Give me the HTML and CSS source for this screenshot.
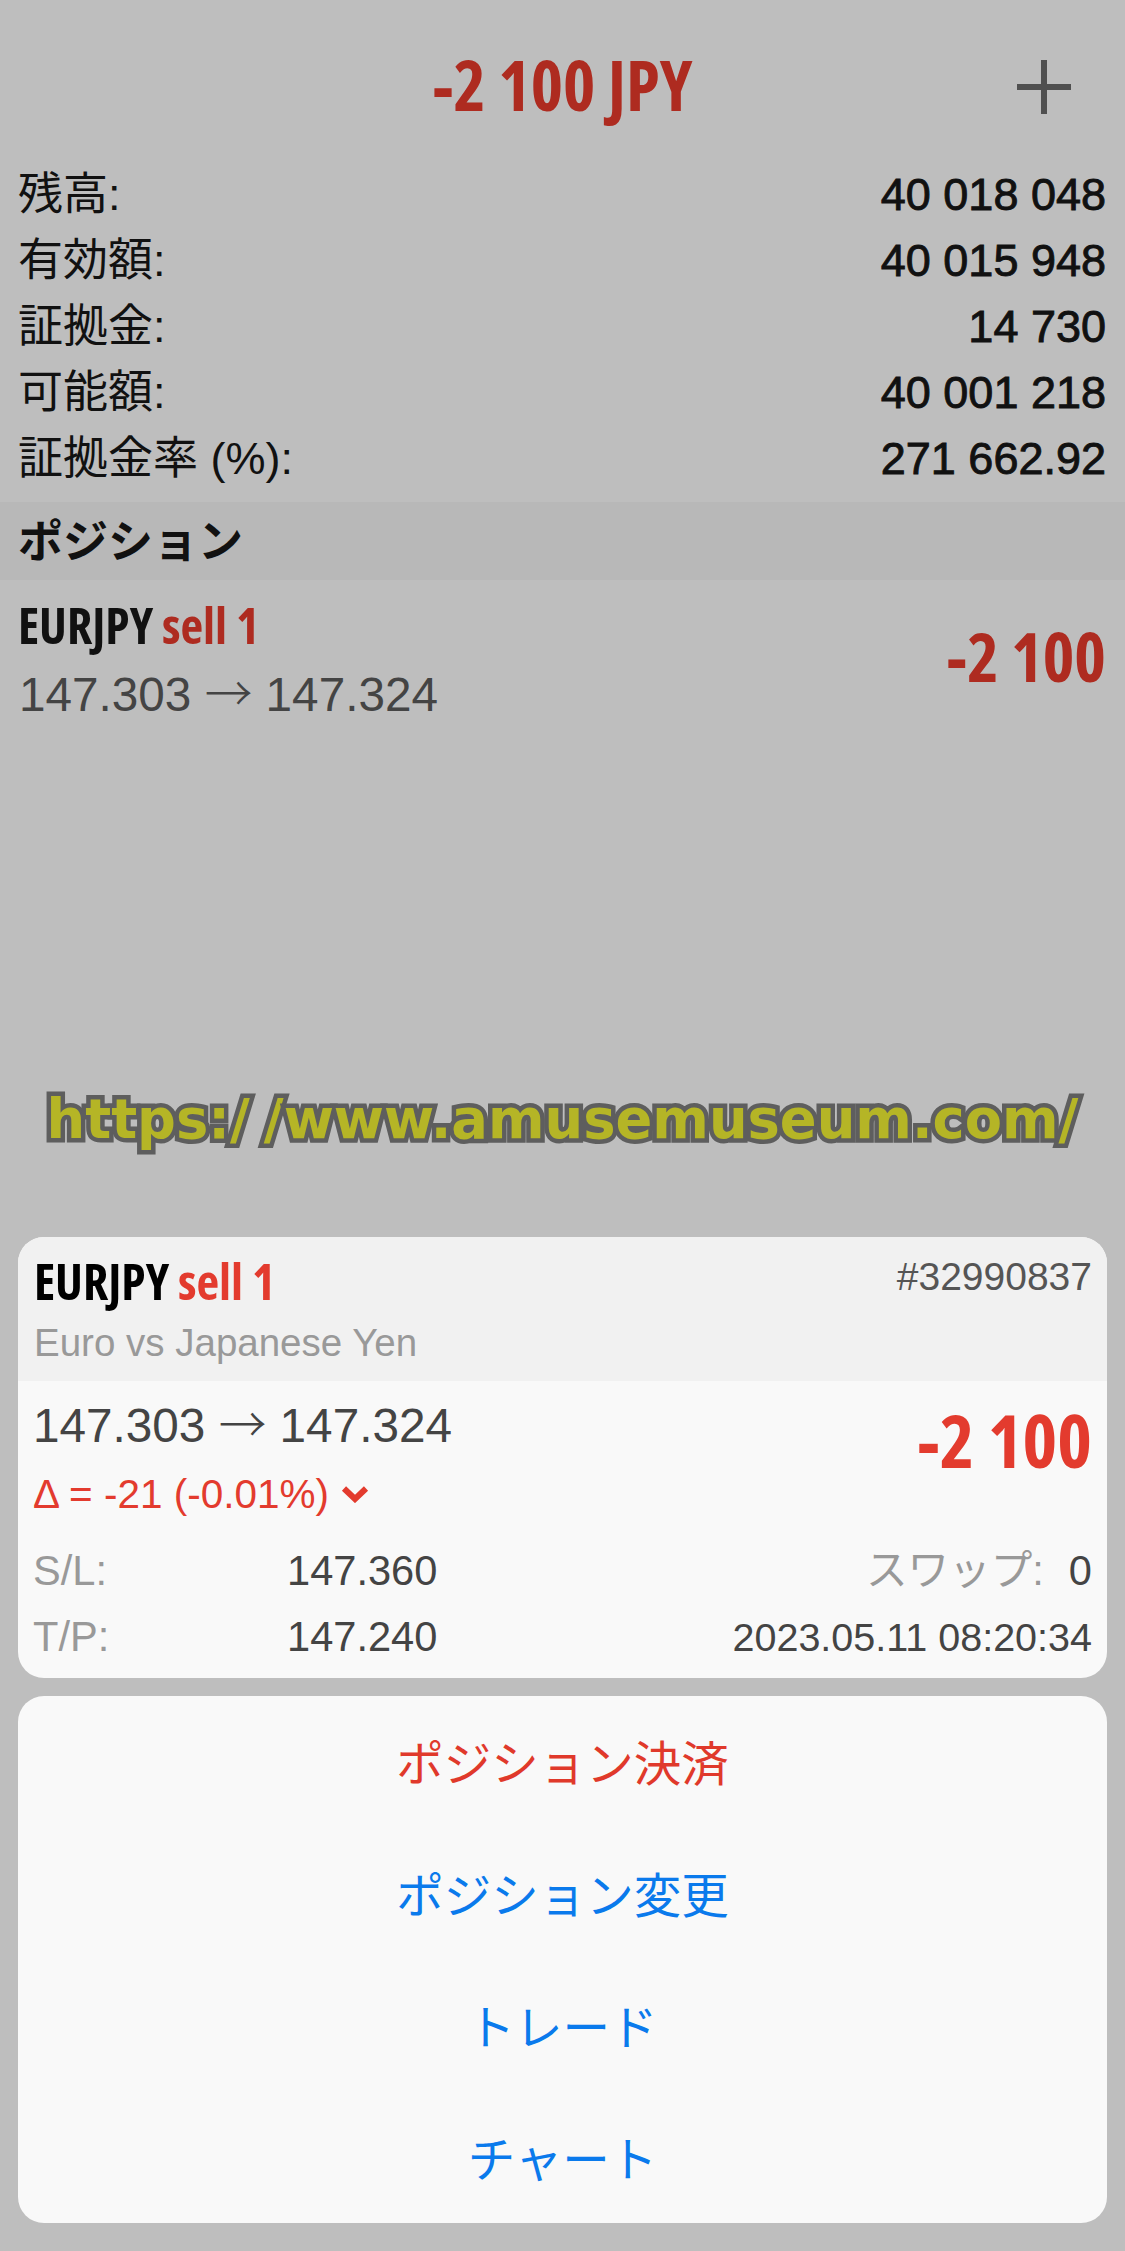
FILE: index.html
```html
<!DOCTYPE html>
<html lang="ja">
<head>
<meta charset="utf-8">
<title>EURJPY</title>
<link rel="stylesheet" href="styles.css">
</head>
<body>
<div class="screen">
  <header class="topbar">
    <div class="total narrow">-2 100 JPY</div>
    <svg class="plus" viewBox="0 0 54 54" aria-hidden="true"><path d="M27 0V54M0 27H54" fill="none" stroke="#505050" stroke-width="6"/></svg>
  </header>
  <section class="summary">
    <div class="row"><span>残高:</span><b>40 018 048</b></div>
    <div class="row"><span>有効額:</span><b>40 015 948</b></div>
    <div class="row"><span>証拠金:</span><b>14 730</b></div>
    <div class="row"><span>可能額:</span><b>40 001 218</b></div>
    <div class="row"><span>証拠金率 (%):</span><b>271 662.92</b></div>
  </section>
  <div class="band">ポジション</div>
  <section class="position">
    <div>
      <div class="symbol narrow">EURJPY <em>sell 1</em></div>
      <div class="prices">147.303 <span class="arrow">→</span> 147.324</div>
    </div>
    <div class="profit narrow">-2 100</div>
  </section>
  <div class="watermark">https:/<span class="slash">/</span>www.amusemuseum.com/</div>
  <section class="sheet">
    <div class="card">
      <div class="card-head">
        <div class="head-top">
          <div class="symbol narrow">EURJPY <em>sell 1</em></div>
          <div class="ticket">#32990837</div>
        </div>
        <div class="desc">Euro vs Japanese Yen</div>
      </div>
      <div class="card-body">
        <div class="quote">
          <div>
            <div class="prices">147.303 <span class="arrow">→</span> 147.324</div>
            <div class="delta">Δ = -21 (-0.01%)<svg class="chev" viewBox="0 0 28 18" aria-hidden="true"><path d="M3 3.5L14 14L25 3.5" fill="none" stroke="#e33b2e" stroke-width="6"/></svg></div>
          </div>
          <div class="profit narrow">-2 100</div>
        </div>
        <div class="detail">
          <div class="line"><span class="label">S/L:</span><span class="val">147.360</span><span class="right"><span class="label">スワップ:</span><span class="val zero">0</span></span></div>
          <div class="line"><span class="label">T/P:</span><span class="val">147.240</span><span class="right"><span class="val date">2023.05.11 08:20:34</span></span></div>
        </div>
      </div>
    </div>
    <nav class="menu">
      <div class="item danger">ポジション決済</div>
      <div class="item">ポジション変更</div>
      <div class="item">トレード</div>
      <div class="item">チャート</div>
    </nav>
  </section>
</div>
</body>
</html>
```
FILE: styles.css
```css
* { box-sizing: border-box; }
html, body { margin: 0; padding: 0; }
body {
  width: 1125px;
  height: 2251px;
  overflow: hidden;
  background: #bebebe;
  font-family: "Liberation Sans", "Noto Sans CJK JP", sans-serif;
  color: #111;
}
.screen { display: flex; flex-direction: column; height: 2251px; }
.narrow { font-family: "Open Sans", sans-serif; font-stretch: 75%; font-weight: 700; }
.topbar { height: 162px; padding-top: 48px; position: relative; display: flex; justify-content: center; align-items: flex-start; }
.total { font-size: 69px; line-height: 72px; color: #ae2b20; }
.plus { position: absolute; left: 1017px; top: 60px; width: 54px; height: 54px; }
.summary { padding: 0 19px; height: 340px; }
.row { height: 66px; display: flex; justify-content: space-between; align-items: center; font-size: 45px; line-height: 66px; }
.row span { margin-left: -1px; }
.row b { font-weight: 400; -webkit-text-stroke: 0.9px #111; color: #111; }
.band { height: 78px; background: #b8b8b8; padding-left: 18px; font-size: 45px; line-height: 74px; font-weight: 700; font-family: "Noto Sans CJK JP", sans-serif; }
.position { display: flex; justify-content: space-between; padding: 17px 19px 0; height: 657px; position: relative; }
.symbol { font-size: 49.5px; line-height: 56px; color: #111; margin-left: -1px; }
.symbol em { font-style: normal; color: #ae2b20; }
.prices { font-size: 47.7px; line-height: 56px; color: #444; margin-top: 10px; }
.arrow { font-family: "Noto Sans CJK JP", sans-serif; font-weight: 300; }
.profit { font-size: 67.5px; line-height: 72px; color: #ae2b20; margin-top: 23px; }
.watermark { height: 0; text-align: center; font-family: "DejaVu Sans", sans-serif; font-weight: 700; font-size: 54.3px; line-height: 64px; color: #b5b526; -webkit-text-stroke: 9px #5e5e5e; paint-order: stroke fill; position: relative; top: -149px; }
.slash { margin-left: 14px; }
.sheet { padding: 0 18px; display: flex; flex-direction: column; gap: 18px; }
.card { background: #f9f9f9; border-radius: 26px; overflow: hidden; height: 441px; }
.card-head { background: #f1f1f1; height: 144px; padding: 16px 15px 0 16px; }
.head-top { display: flex; justify-content: space-between; align-items: flex-start; }
.card-head .symbol { line-height: 56px; color: #000; margin-left: 0; }
.card-head .symbol em { color: #e33b2e; }
.ticket { font-size: 39px; line-height: 48px; color: #555; }
.desc { font-size: 38.5px; line-height: 48px; color: #999; margin-top: 10px; }
.card-body { padding: 13px 15px 0; }
.quote { display: flex; justify-content: space-between; height: 144px; }
.card-body .prices { margin-top: 0; color: #444; }
.delta { font-size: 40.5px; line-height: 48px; color: #e33b2e; margin-top: 16px; display: flex; align-items: center; }
.chev { width: 28px; height: 18px; margin-left: 12px; }
.card-body .profit { color: #e33b2e; font-size: 74px; line-height: 76px; margin-top: 8px; }
.detail { display: flex; flex-direction: column; }
.line { height: 66px; display: flex; align-items: baseline; font-size: 41.6px; line-height: 66px; }
.label { color: #999; }
.val { color: #444; }
.line > .label { width: 254px; }
.right { margin-left: auto; display: flex; align-items: baseline; }
.zero { margin-left: 25px; }
.date { font-size: 39.5px; }
.menu { background: #f9f9f9; border-radius: 26px; height: 527px; display: flex; flex-direction: column; }
.item { height: 132px; padding-bottom: 2px; display: flex; align-items: center; justify-content: center; font-size: 47.5px; font-family: "Noto Sans CJK JP", sans-serif; font-weight: 400; color: #0a7aec; }
.item.danger { color: #e0392b; }
```
